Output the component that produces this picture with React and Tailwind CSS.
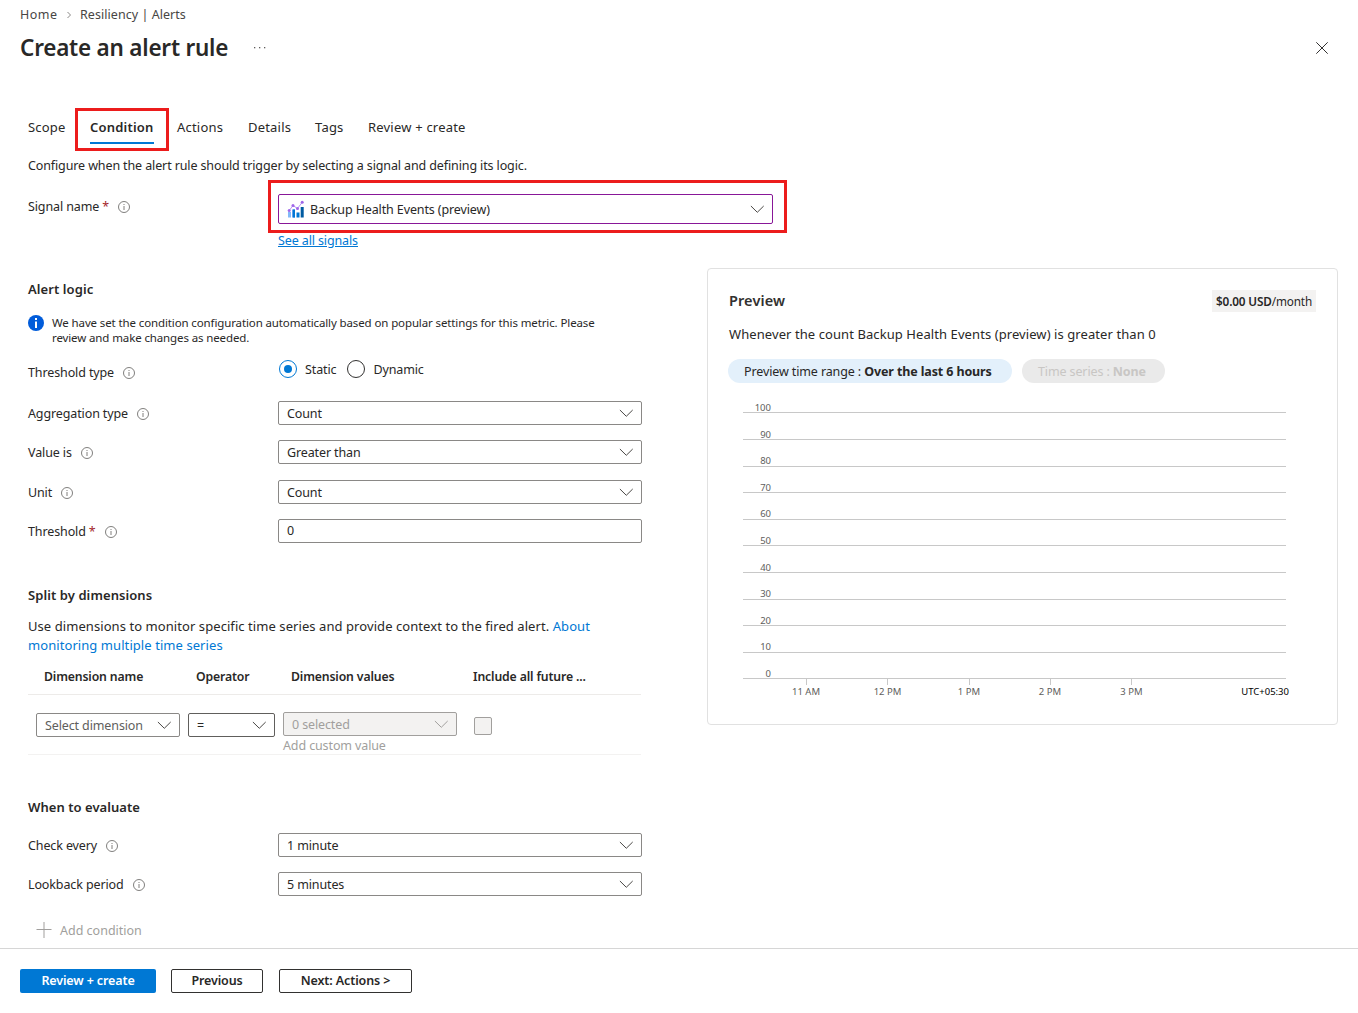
import React, { useState } from 'react';

const TABS = [
  { name: 'Scope', className: 'w-[62px]' },
  { name: 'Condition', className: 'w-[87px]' },
  { name: 'Actions', className: 'w-[71px]' },
  { name: 'Details', className: 'w-[67px]' },
  { name: 'Tags', className: 'w-[53px]' },
  { name: 'Review + create', className: 'w-[100px]' },
];

const HOURS = [
  { label: '11 AM', x: 68 },
  { label: '12 PM', x: 149.5 },
  { label: '1 PM', x: 231 },
  { label: '2 PM', x: 312 },
  { label: '3 PM', x: 393.5 },
];

const Chevron = ({ className = 'text-[#484644]' }) => (
  <svg className={`shrink-0 ${className}`} width="14" height="8" viewBox="0 0 14 8" fill="none" stroke="currentColor">
    <path d="M0.9 1L7.3 7.3L13.7 1" />
  </svg>
);

const InfoIcon = () => (
  <svg className="shrink-0" width="12" height="12" viewBox="0 0 12 12" fill="none" stroke="#605e5c">
    <circle cx="6" cy="6" r="5.5" strokeWidth="0.8" />
    <path d="M6 5V9M6 3V4" strokeWidth="0.8" />
  </svg>
);

const MetricIcon = () => (
  <svg className="shrink-0" width="18" height="18" viewBox="0 0 18 18">
    <rect x="1" y="12" width="3" height="5.5" fill="#83b9f9" />
    <rect x="5" y="9.5" width="3" height="8" fill="#5ea0ef" />
    <rect x="6" y="9.5" width="2" height="8" fill="#0078d4" />
    <rect x="9.5" y="12.5" width="3" height="5" fill="#0078d4" />
    <rect x="13.7" y="7" width="3" height="10.5" fill="#005ba1" />
    <path d="M2.2 10.5L6 5.5L10.5 8.5L15.2 2.3" fill="none" stroke="#b796f9" strokeWidth="1" />
    <circle cx="2.2" cy="10.5" r="1.5" fill="#a067e8" />
    <circle cx="6" cy="5.5" r="1.5" fill="#a067e8" />
    <circle cx="10.5" cy="8.5" r="1.5" fill="#a067e8" />
    <circle cx="15.2" cy="2.3" r="1.5" fill="#a067e8" />
  </svg>
);

const Label = ({ children, required, className = '' }) => (
  <div className={`flex h-6 w-[250px] shrink-0 items-center ${className}`}>
    <span className="mt-0.5">{children}</span>
    {required && <span className="ml-[3px] mt-0.5 text-[#a4262c]">*</span>}
    <span className="ml-[9px] mt-px"><InfoIcon /></span>
  </div>
);

const Select = ({ value, className = 'w-[364px] border-[#8a8886]', chevron }) => (
  <div className={`flex h-6 items-center justify-between rounded-xs border pl-2 pr-2 ${className}`}>
    <span className="mt-0.5">{value}</span>
    <Chevron className={chevron} />
  </div>
);

const Field = ({ label, required, children, className = '' }) => (
  <div className={`flex ${className}`}>
    <Label required={required}>{label}</Label>
    {children}
  </div>
);

const Radio = ({ label, checked, onChange }) => (
  <button className="flex items-center gap-2" onClick={onChange}>
    <span className={`flex size-[18px] items-center justify-center rounded-full border ${checked ? 'border-[#0078d4]' : 'border-[#323130]'}`}>
      {checked && <span className="size-2 rounded-full bg-[#0078d4]" />}
    </span>
    <span className="mt-0.5">{label}</span>
  </button>
);

const PreviewChart = () => (
  <svg className="ml-[30px] mt-[17px]" width="560" height="300" viewBox="0 0 560 300" fontSize="9.5" letterSpacing="0">
    {Array.from({ length: 11 }, (_, i) => {
      const y = Math.ceil((i * 266) / 10) + 12.5;
      return (
        <g key={i}>
          <path d={`M5 ${y}H548`} stroke="#c8c8c8" />
          <text x="33" y={Math.round(i * 26.6) + 11} textAnchor="end" fill="#605e5c">{100 - i * 10}</text>
        </g>
      );
    })}
    {HOURS.map((hour) => (
      <g key={hour.label}>
        <path d={`M${Math.floor(hour.x) + 0.5} 279V285`} stroke="#c8c8c8" />
        <text x={hour.x} y="295" textAnchor="middle" fill="#605e5c">{hour.label}</text>
      </g>
    ))}
    <text x="551" y="295" textAnchor="end" fill="#000">UTC+05:30</text>
  </svg>
);

const PreviewCard = () => (
  <div className="h-[457px] w-[631px] shrink-0 rounded-[4px] border border-[#e1e1e1]">
    <div className="flex items-center justify-between pl-[21px] pr-[21px] pt-[21px]">
      <h3 className="-mt-0.5 text-[14.5px] font-semibold tracking-[0.1px] text-[#323130]">Preview</h3>
      <span className="flex h-[22px] w-[104px] items-center justify-center bg-[#f3f2f1] text-[11.75px] tracking-[-0.15px]">
        <b className="font-semibold">$0.00 USD</b>/month
      </span>
    </div>
    <p className="mt-3 pl-[21px] text-[13px] leading-5 tracking-[0.08px]">
      Whenever the count Backup Health Events (preview) is greater than 0
    </p>
    <div className="ml-5 mt-[15px] flex gap-2.5">
      <div className="flex h-6 w-[284px] items-center whitespace-pre rounded-full bg-[#e3f0fb] pl-4 pt-0.5">
        Preview time range : <b>Over the last 6 hours</b>
      </div>
      <div className="flex h-6 w-[143px] items-center whitespace-pre rounded-full bg-[#eaeaea] pl-4 pt-0.5 text-[#c8c6c4]">
        Time series : <b>None</b>
      </div>
    </div>
    <PreviewChart />
  </div>
);

const DimensionsTable = () => (
  <div className="w-[613px]">
    <div className="flex h-9 items-center border-b border-[#edebe9] pl-4 text-[12.25px] font-semibold tracking-[-0.14px]">
      <span className="w-[152px]">Dimension name</span>
      <span className="w-[95px]">Operator</span>
      <span className="w-[182px]">Dimension values</span>
      <span>Include all future ...</span>
    </div>
    <div className="flex h-[60px] border-b border-[#f3f2f1] pl-2 pt-[17px]">
      <Select value="Select dimension" className="mt-px w-[144px] border-[#8a8886] text-[#605e5c]" />
      <Select value="=" className="ml-2 mt-px w-[87px] border-[#605e5c]" />
      <div className="ml-2 text-[#a19f9d]">
        <Select value="0 selected" className="w-[174px] border-[#a19f9d] bg-[#f3f2f1]" chevron="text-[#a19f9d]" />
        <div className="leading-5">Add custom value</div>
      </div>
      <div className="ml-[17px] mt-[5px] size-[18px] rounded-xs border border-[#a19f9d] bg-[#f3f2f1]" />
    </div>
  </div>
);

const App = () => {
  const [activeTab, setActiveTab] = useState('Condition');
  const [thresholdType, setThresholdType] = useState('Static');

  return (
    <div className="relative h-[1013px] w-[1358px] overflow-hidden whitespace-nowrap bg-white font-['Noto_Sans',sans-serif] text-[12.5px] leading-5 tracking-[-0.12px] text-[#292827]">
      <nav className="flex h-7 items-center pl-5 pt-0.5 tracking-[0.05px] text-[#484644]">
        <span className="w-[38px] tracking-[0.5px]">Home</span>
        <svg className="mx-[9px]" width="4" height="8" viewBox="0 0 4 8" fill="none" stroke="#8a8886">
          <path d="M0.5 1L3.5 4L0.5 7" />
        </svg>
        <span>Resiliency | Alerts</span>
      </nav>
      <header className="flex h-10 items-center pl-5 pr-[30px]">
        <h1 className="w-[234px] text-[22.5px] font-semibold tracking-[-0.22px]">Create an alert rule</h1>
        <svg width="12" height="2" viewBox="0 0 12 2" fill="#605e5c">
          <rect width="1.3" height="1.3" />
          <rect x="5" width="1.3" height="1.3" />
          <rect x="10" width="1.3" height="1.3" />
        </svg>
        <svg className="ml-auto" width="12" height="12" viewBox="0 0 12 12" stroke="#323130">
          <path d="M0.3 0.3L11.7 11.7M11.7 0.3L0.3 11.7" />
        </svg>
      </header>

      <div className="mt-[49px] flex h-[27px] pl-7 text-[13px] tracking-[0.2px]">
        {TABS.map((tab) => (
          <button key={tab.name} className={`text-left ${tab.className}`} onClick={() => setActiveTab(tab.name)}>
            <span className={tab.name === activeTab ? 'inline-block h-[27px] border-b-2 border-[#0078d4] font-semibold' : 'inline-block h-[27px]'}>
              {tab.name}
            </span>
          </button>
        ))}
      </div>
      <p className="mt-3 pl-7">
        Configure when the alert rule should trigger by selecting a signal and defining its logic.
      </p>

      <div className="mt-[18px] flex h-[74px] pl-7">
        <Label required>Signal name</Label>
        <div>
          <div className="flex h-[30px] w-[495px] items-center rounded-xs border border-[#881798] pl-2 pr-2">
            <MetricIcon />
            <span className="ml-[5px] mt-0.5 grow">Backup Health Events (preview)</span>
            <Chevron />
          </div>
          <a className="mt-[7px] block text-[#0078d4] underline">See all signals</a>
        </div>
      </div>

      <div className="flex pl-7">
        <main className="w-[679px]">
          <h2 className="text-[13px] font-semibold leading-[42px] tracking-[0.08px]">Alert logic</h2>
          <div className="mt-[5px] flex gap-2 text-[11.5px] leading-[15px]">
            <svg width="16" height="16" viewBox="0 0 16 16">
              <circle cx="8" cy="8" r="8" fill="#015cda" />
              <path d="M7 6.5H9V13H7ZM7 3H9V5H7Z" fill="#fff" />
            </svg>
            <p>
              We have set the condition configuration automatically based on popular settings for this metric. Please
              <br />
              review and make changes as needed.
            </p>
          </div>

          <Field label="Threshold type" className="mt-[15px]">
            <div className="-mt-1.5 ml-px flex gap-[11px]">
              {['Static', 'Dynamic'].map((type) => (
                <Radio key={type} label={type} checked={thresholdType === type} onChange={() => setThresholdType(type)} />
              ))}
            </div>
          </Field>
          <Field label="Aggregation type" className="mt-[17px]"><Select value="Count" /></Field>
          <Field label="Value is" className="mt-[15px]"><Select value="Greater than" /></Field>
          <Field label="Unit" className="mt-4"><Select value="Count" /></Field>
          <Field label="Threshold" required className="mt-[15px]">
            <div className="h-6 w-[364px] rounded-xs border border-[#8a8886] pl-2 leading-[22px]">0</div>
          </Field>

          <h2 className="mt-[42px] text-[13px] font-semibold tracking-[0.08px]">Split by dimensions</h2>
          <p className="mb-1 mt-3 text-[13px] leading-[19px] tracking-[0.07px]">
            Use dimensions to monitor specific time series and provide context to the fired alert. <a className="text-[#0078d4]">About</a>
            <br />
            <a className="text-[#0078d4]">monitoring multiple time series</a>
          </p>
          <DimensionsTable />

          <h2 className="mt-[42px] text-[13px] font-semibold tracking-[0.05px]">When to evaluate</h2>
          <Field label="Check every" className="mt-4"><Select value="1 minute" /></Field>
          <Field label="Lookback period" className="mt-[15px]"><Select value="5 minutes" /></Field>
          <button className="ml-2 mt-6 flex items-center gap-2 tracking-normal text-[#a19f9d]">
            <svg width="16" height="16" viewBox="0 0 16 16" stroke="currentColor">
              <path d="M8 0V16M0.5 7.5H15.5" />
            </svg>
            <span className="-mb-px mt-px">Add condition</span>
          </button>
        </main>
        <PreviewCard />
      </div>

      <footer className="mt-2 flex border-t border-[#d6d6d6] pl-5 pt-5 font-semibold">
        <button className="h-6 w-[136px] rounded-xs bg-[#0078d4] text-white">Review + create</button>
        <button className="ml-[15px] h-6 w-[92px] rounded-xs border border-[#323130]">Previous</button>
        <button className="ml-4 h-6 w-[133px] rounded-xs border border-[#323130]">Next: Actions &gt;</button>
      </footer>

      {/* highlight frames */}
      <div className="absolute left-[75px] top-[108px] h-[43px] w-[94px] border-3 border-[#ec1c1c]" />
      <div className="absolute left-[268px] top-[180px] h-[53px] w-[519px] border-3 border-[#ec1c1c]" />
    </div>
  );
};

export default App;
